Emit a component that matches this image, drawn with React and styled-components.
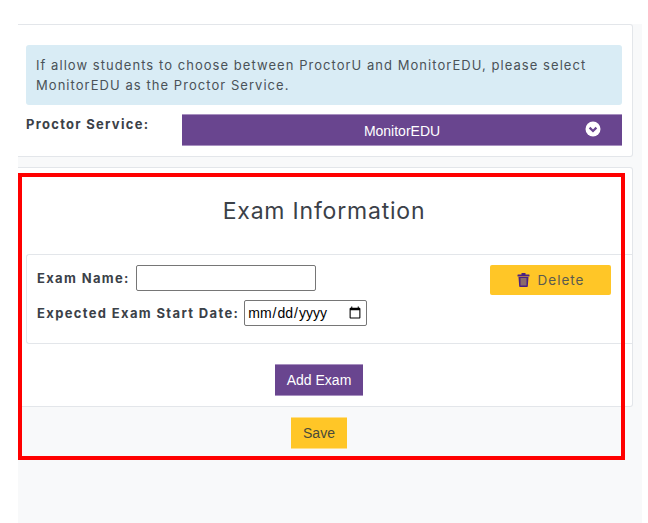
import React from 'react';
import styled, { createGlobalStyle } from 'styled-components';

const GlobalStyle = createGlobalStyle`
  html, body {
    margin: 0;
    padding: 0;
    background: #fff;
  }
  body {
    font-family: Inter, "Liberation Sans", sans-serif;
    color: #3b4148;
    overflow: hidden;
  }
`;

const Page = styled.div`
  position: relative;
  margin: 24px 6px 0 18px;
  height: 499px;
  background: #f8f9fa;
  box-sizing: border-box;
  padding-right: 9px;
`;

const Card = styled.section`
  background: #fff;
  border: 1px solid #e3e6ea;
  border-left: 0;
  border-radius: 0 3px 3px 0;
  box-sizing: border-box;
  margin-bottom: 10px;
  padding: ${props => props.$padding || '0'};
  height: ${props => props.$height};
`;

const Notice = styled.div`
  background: #d9ecf5;
  border-radius: 3px;
  color: #4a5258;
  font-size: 13px;
  line-height: 20px;
  letter-spacing: 1.05px;
  padding: 10px;
  margin-bottom: 9px;
`;

const ServiceRow = styled.div`
  display: flex;
  align-items: flex-start;
`;

const ServiceLabel = styled.label`
  width: 156px;
  font-size: 13px;
  font-weight: 700;
  letter-spacing: 1.28px;
  line-height: 20px;
  color: #3b4148;
`;

const ServiceSelect = styled.div`
  flex: 1;
  height: 32px;
  position: relative;
  background: #69458f;
  border-top: 1px solid #a890c0;
  border-bottom: 1px solid #a890c0;
  box-sizing: border-box;
  color: #fff;
  font-family: "Liberation Sans", sans-serif;
  font-size: 14px;
  display: flex;
  align-items: center;
  justify-content: center;
  padding-top: 2px;

  svg {
    position: absolute;
    right: 21px;
    top: 6px;
  }
`;

const Title = styled.h2`
  margin: 0;
  height: 86px;
  padding: 27px 2px 0 0;
  box-sizing: border-box;
  text-align: center;
  font-size: 23px;
  font-weight: 400;
  letter-spacing: 0.8px;
  line-height: 32px;
  color: #3b4148;
`;

const ExamRow = styled.div`
  margin-left: 8px;
  height: 90px;
  box-sizing: border-box;
  border: 1px solid #e3e6ea;
  border-right: 0;
  border-radius: 3px 0 0 3px;
  padding: 10px 21px 0 10px;
  display: flex;
  justify-content: space-between;
  align-items: flex-start;
`;

const Fields = styled.div`
  display: flex;
  flex-direction: column;
  gap: 9px;
`;

const Field = styled.div`
  display: flex;
  align-items: center;
  gap: ${props => props.$gap};
`;

const FieldLabel = styled.label`
  font-size: 13px;
  font-weight: 700;
  letter-spacing: 1.35px;
  color: #3b4148;
`;

const TextInput = styled.input`
  box-sizing: border-box;
  width: 180px;
  height: 26px;
  border: 1px solid #767676;
  border-radius: 2px;
  background: #fff;
  padding: 1px 2px;
`;

const DateInput = styled(TextInput)`
  width: 123px;
  font-family: "Liberation Sans", sans-serif;
  font-size: 14px;
`;

const Button = styled.button`
  border: 0;
  border-top: 1px solid ${props => (props.$yellow ? '#ffdf8a' : '#a890c0')};
  border-bottom: 1px solid ${props => (props.$yellow ? '#ffdf8a' : '#a890c0')};
  font-family: "Liberation Sans", sans-serif;
  font-size: 14px;
  height: 32px;
  padding: 0;
  background: ${props => (props.$yellow ? '#ffc627' : '#69458f')};
  color: ${props => (props.$yellow ? '#4a4a3a' : '#fff')};
  width: ${props => props.$width};
`;

const DeleteButton = styled.button`
  width: 121px;
  height: 30px;
  border: 0;
  border-radius: 2px;
  background: #ffc627;
  color: #5a5a50;
  font-family: Inter, "Liberation Sans", sans-serif;
  font-size: 13.5px;
  letter-spacing: 1px;
  display: flex;
  align-items: center;
  justify-content: center;
  gap: 8px;
  padding: 0;
`;

const Actions = styled.div`
  display: flex;
  justify-content: center;
  padding: 20px 12px 0 0;
`;

const Footer = styled.div`
  display: flex;
  justify-content: center;
  padding-right: 13px;
`;

const Highlight = styled.div`
  position: absolute;
  left: 0;
  top: 149px;
  width: 607px;
  height: 287px;
  box-sizing: border-box;
  border: 4px solid #ff0000;
  pointer-events: none;
`;

const TrashIcon = () => (
  <svg width="13" height="14" viewBox="0 0 13 14">
    <rect x="0.5" y="1.5" width="12" height="2" rx="0.5" fill="#4b2183" />
    <rect x="4.5" y="0" width="4" height="2" fill="#4b2183" />
    <path d="M1.5 4h10l-.7 9.2a.8.8 0 0 1-.8.8H3a.8.8 0 0 1-.8-.8z" fill="#4b2183" />
    <rect x="3.5" y="5" width="6" height="7.5" fill="#8a6a6c" />
  </svg>
);

const ChevronCircle = () => (
  <svg width="16" height="16" viewBox="0 0 16 16">
    <circle cx="8" cy="8" r="7.5" fill="#fff" />
    <path d="M4.6 6.6 8 10l3.4-3.4" fill="none" stroke="#69458f" strokeWidth="2.2" />
  </svg>
);

export default function App() {
  return (
    <>
      <GlobalStyle />
      <Page>
        <Card $padding="20px 10px 0 8px" $height="133px">
          <Notice>
            If allow students to choose between ProctorU and MonitorEDU, please select MonitorEDU as the Proctor Service.
          </Notice>
          <ServiceRow>
            <ServiceLabel>Proctor Service:</ServiceLabel>
            <ServiceSelect>
              MonitorEDU
              <ChevronCircle />
            </ServiceSelect>
          </ServiceRow>
        </Card>
        <Card $height="240px">
          <Title>Exam Information</Title>
          <ExamRow>
            <Fields>
              <Field $gap="6px">
                <FieldLabel>Exam Name:</FieldLabel>
                <TextInput type="text" />
              </Field>
              <Field $gap="5px">
                <FieldLabel>Expected Exam Start Date:</FieldLabel>
                <DateInput type="date" />
              </Field>
            </Fields>
            <DeleteButton>
              <TrashIcon />
              Delete
            </DeleteButton>
          </ExamRow>
          <Actions>
            <Button $width="88px">Add Exam</Button>
          </Actions>
        </Card>
        <Footer>
          <Button $yellow $width="56px">Save</Button>
        </Footer>
        <Highlight />
      </Page>
    </>
  );
}
